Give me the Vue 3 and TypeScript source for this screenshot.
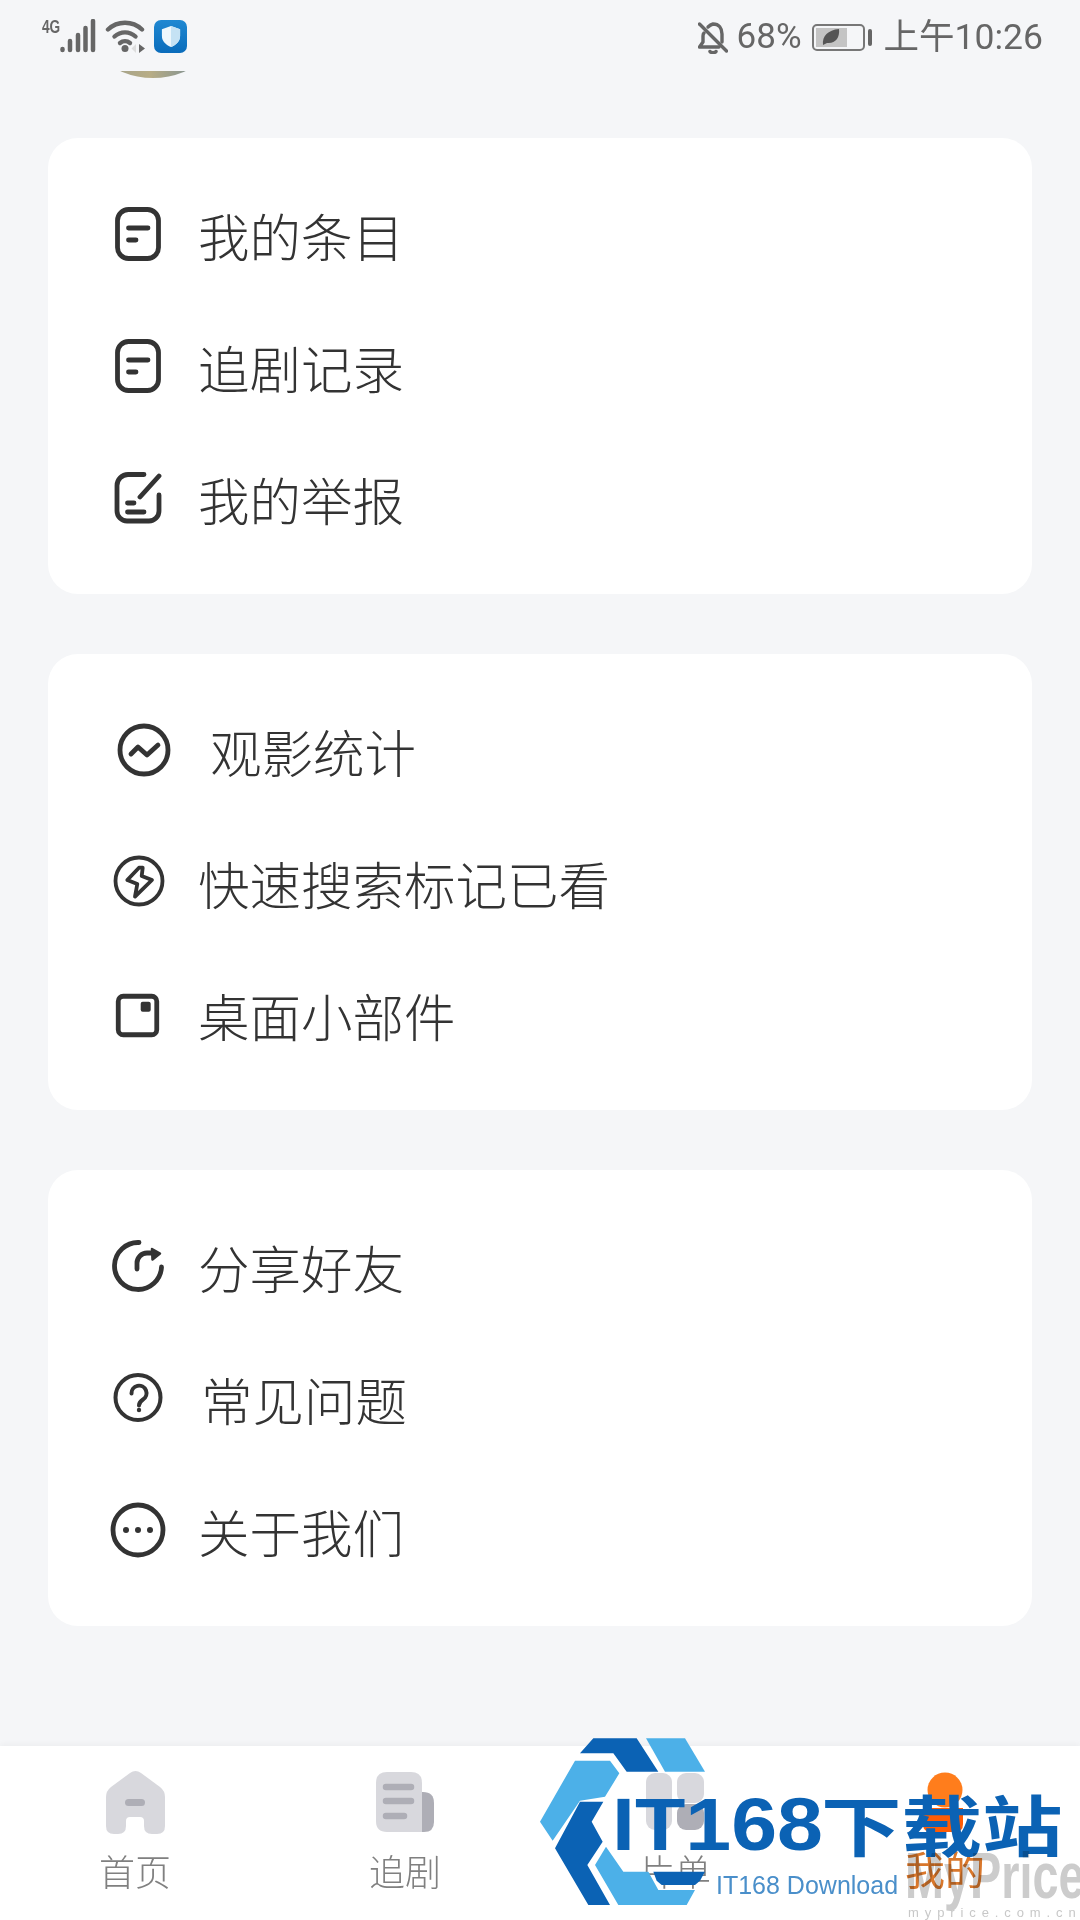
<script setup lang="ts">
interface MenuItem {
  label: string;
  icon: string;
  shift?: number;
}

const sections: MenuItem[][] = [
  [
    { label: '我的条目', icon: 'note' },
    { label: '追剧记录', icon: 'note' },
    { label: '我的举报', icon: 'report' },
  ],
  [
    { label: '观影统计', icon: 'chart', shift: 12 },
    { label: '快速搜索标记已看', icon: 'bolt' },
    { label: '桌面小部件', icon: 'widget' },
  ],
  [
    { label: '分享好友', icon: 'share' },
    { label: '常见问题', icon: 'help', shift: 3 },
    { label: '关于我们', icon: 'more' },
  ],
];
</script>

<template>
  <div class="page">
    <div class="status-bar">
      <div class="status-left">
        <span class="net">4G</span>
        <svg class="signal" width="36" height="34" viewBox="0 0 36 34">
          <path d="M2.500 31v-1M10 31v-9M18 31V16M25.500 31V9M33 31V2" stroke="#666" stroke-width="4.500" stroke-linecap="round" />
        </svg>
        <svg class="wifi" width="40" height="36" viewBox="0 0 40 36" fill="none" stroke="#666" stroke-width="4.400" stroke-linecap="round">
          <path d="M3 10.500C12.500 1.500 27.500 1.500 37 10.500" />
          <path d="M9.500 17.500c6-5.500 15-5.500 21 0" />
          <path d="M15 24c3-2.500 7-2.500 10 0" />
          <circle cx="20" cy="29.500" r="3.500" fill="#666" stroke="none" />
          <path d="M31 25v9l-4.500-4.500z" fill="#ddd" stroke="none" />
          <path d="M34 25l6 4.500-6 4.500z" fill="#666" stroke="none" />
        </svg>
        <div class="app-badge">
          <svg width="20" height="23" viewBox="0 0 22 25">
            <path d="M11 1l10 3.500V12c0 6-4.500 10-10 12C5.500 22 1 18 1 12V4.500z" fill="#eef7fc" />
            <path d="M11 1l10 3.500V12c0 6-4.500 10-10 12z" fill="#c5e2f4" />
          </svg>
        </div>
      </div>
      <div class="status-right">
        <svg class="bell" width="30" height="33" viewBox="0 0 30 33" fill="none" stroke="#666" stroke-width="3.400" stroke-linecap="round" stroke-linejoin="round">
          <path d="M1.500 3l27 27" />
          <path d="M6 12c0 0-1 1-1 3v6l-3.500 5H21" />
          <path d="M10 6c1.500-1.500 3-2.500 5-3 6 0 9 4 9 10v8" />
          <path d="M12 30.500c1 1.500 5 1.500 6 0" />
        </svg>
        <span class="percent">68%</span>
        <div class="battery">
          <div class="battery-body">
            <div class="battery-fill">
              <svg width="18" height="18" viewBox="0 0 18 18">
                <path d="M1 17C0 8 6 2 17 1c1 9-4 15-12 14z" fill="#555" />
              </svg>
            </div>
          </div>
          <div class="battery-nub"></div>
        </div>
        <span class="clock">上午10:26</span>
      </div>
    </div>

    <div class="avatar-sliver"><div class="avatar"></div></div>

    <div class="sections">
      <section v-for="(items, i) in sections" :key="i" class="card">
        <div v-for="item in items" :key="item.label" class="row">
          <svg class="row-icon" width="60" height="60" viewBox="0 0 60 60" fill="none" stroke="#333" stroke-width="4.800" stroke-linecap="round" stroke-linejoin="round">
            <template v-if="item.icon === 'note'">
              <rect x="9.500" y="5.500" width="41" height="49" rx="11" />
              <path d="M20.500 24H40M20.500 36H28" />
            </template>
            <template v-else-if="item.icon === 'report'">
              <path d="M36 6.500H20a11 11 0 0 0-11 11V43a10 10 0 0 0 10 10h22a10 10 0 0 0 10-10V27" />
              <path d="M32 29L51 8M19.500 35H26M19.500 44H36" />
            </template>
            <template v-else-if="item.icon === 'chart'">
              <circle cx="36" cy="30" r="24" />
              <path d="M23 34l7-7 9 8 11-10" />
            </template>
            <template v-else-if="item.icon === 'bolt'">
              <g stroke-width="3.800">
                <circle cx="31" cy="29" r="23.500" />
                <path d="M31 15.700L19.300 28l10 4L27 44.700 44 28l-10.300-4 1-8.300z" />
              </g>
            </template>
            <template v-else-if="item.icon === 'widget'">
              <rect x="10.250" y="12.250" width="38.500" height="38.500" rx="5" />
              <rect x="32.700" y="17.700" width="10" height="10" rx="2" fill="#333" stroke="none" />
            </template>
            <template v-else-if="item.icon === 'share'">
              <path d="M31 6.500A23.500 23.500 0 1 0 53.500 31" />
              <path d="M29 33v-6a10 10 0 0 1 10-10h6" />
              <path d="M44 13l8 4.500-7.500 6z" fill="#333" stroke-width="2.500" />
            </template>
            <template v-else-if="item.icon === 'help'">
              <g stroke-width="4">
                <circle cx="30" cy="29.500" r="22.500" />
                <path d="M23.500 25.500a7.500 7.500 0 1 1 11.500 6c-3 2-4 3-4 6" />
              </g>
              <circle cx="31" cy="42" r="2.200" fill="#333" stroke="none" />
            </template>
            <template v-else>
              <circle cx="30" cy="30" r="25" />
              <g fill="#333" stroke="none">
                <circle cx="18" cy="30" r="3" />
                <circle cx="30" cy="30" r="3" />
                <circle cx="42" cy="30" r="3" />
              </g>
            </template>
          </svg>
          <span class="row-label" :style="{ marginLeft: `${30 + (item.shift ?? 0)}px` }">{{ item.label }}</span>
        </div>
      </section>
    </div>

    <nav class="tabs">
      <div class="tab">
        <div class="tab-icon">
          <svg width="59" height="64" viewBox="0 0 59 64">
            <path d="M24 3q5.500-4 11 0L54 17q5 4 5 10v29q0 8-8 8h-5q-8 0-8-8v-5q0-4-4-4H24q-4 0-4 4v5q0 8-8 8H8q-8 0-8-8V27q0-6 5-10z" fill="#d8d8dd" />
            <rect x="19" y="29" width="20" height="7" rx="3.500" fill="#aeaeb6" />
          </svg>
        </div>
        <span>首页</span>
      </div>
      <div class="tab">
        <div class="tab-icon">
          <svg width="58" height="60" viewBox="0 0 58 60">
            <path d="M36 20h11q11 0 11 11v19q0 10-10 10H36z" fill="#aeaeb6" />
            <path d="M11 0h24q11 0 11 11v49H11Q0 60 0 49V11Q0 0 11 0z" fill="#d8d8dd" />
            <path d="M10 15h25M10 29h25M10 44h18" stroke="#aeaeb6" stroke-width="6.500" stroke-linecap="round" />
          </svg>
        </div>
        <span>追剧</span>
      </div>
      <div class="tab">
        <div class="tab-icon">
          <svg width="58" height="58" viewBox="0 0 58 58">
            <rect x="0" y="0" width="26" height="57" rx="9" fill="#d8d8dd" />
            <rect x="31" y="0" width="27" height="30" rx="9" fill="#d8d8dd" />
            <rect x="31" y="31" width="27" height="26" rx="9" fill="#aeaeb6" />
          </svg>
        </div>
        <span>片单</span>
      </div>
      <div class="tab tab-active">
        <div class="tab-icon">
          <svg width="58" height="60" viewBox="0 0 58 60">
            <path d="M7 36h40v16q0 8-8 8H15q-8 0-8-8z" fill="#ff5c05" />
            <circle cx="29" cy="18" r="17.500" fill="#ff7d1c" />
          </svg>
        </div>
        <span>我的</span>
      </div>
    </nav>

    <div class="marks">
      <svg class="logo" width="200" height="180" viewBox="0 0 600 540">
        <g fill="#0b62b4">
          <path d="M150 70L190 25H320L385 125H290L250 70z" />
          <path d="M150 215H220L185 275 218 335 172 405 240 525H175L75 355z" />
          <path d="M370 425H525L510 452 495 465H395L380 452z" />
        </g>
        <g fill="#4cb0e8">
          <path d="M348 25H465L525 125H405z" />
          <path d="M135 92H240L268 130 225 200 150 212 68 332 30 275z" />
          <path d="M228 350L280 425H355L385 480H495L470 525H265L195 405z" />
        </g>
      </svg>
      <div class="mark-latin">IT168</div>
      <div class="mark-cjk">下载站</div>
      <div class="mark-sub">IT168 Download</div>
      <div class="mark-price">MyPrice</div>
      <div class="mark-url">myprice.com.cn</div>
    </div>
  </div>
</template>

<style>
html,
body {
  margin: 0;
  background: #f5f6f8;
}
</style>

<style scoped>
.page {
  position: relative;
  width: 1080px;
  height: 1920px;
  overflow: hidden;
  background: #f5f6f8;
  display: flex;
  flex-direction: column;
  font-family: "Noto Sans CJK SC", "Noto Sans", sans-serif;
}

.status-bar {
  height: 71px;
  flex: none;
  display: flex;
  justify-content: space-between;
  padding: 0 37px 0 42px;
  box-sizing: border-box;
  color: #666;
}

.status-left {
  display: flex;
  align-items: flex-start;
  padding-top: 19px;
}

.net {
  font: 700 19px/16px "Liberation Sans", sans-serif;
  width: 18px;
  transform: scaleX(0.72);
  transform-origin: left top;
}

.wifi {
  margin-left: 9px;
}

.app-badge {
  width: 33px;
  height: 33px;
  margin-left: 9px;
  margin-top: 1px;
  border-radius: 7px;
  background: linear-gradient(180deg, #1f88d2, #0a6cbb);
  display: flex;
  align-items: center;
  justify-content: center;
}

.status-right {
  display: flex;
  align-items: center;
  height: 74px;
  font-family: Roboto, "Noto Sans CJK SC", sans-serif;
  font-size: 35px;
  line-height: 42px;
}

.percent {
  margin-left: 9px;
}

.battery {
  display: flex;
  align-items: center;
  margin-left: 10px;
}

.battery-body {
  width: 53px;
  height: 27px;
  box-sizing: border-box;
  border: 2px solid #777;
  border-radius: 5px;
  padding: 2px;
}

.battery-fill {
  width: 31px;
  height: 100%;
  background: #c4c4c4;
  display: flex;
  align-items: center;
  justify-content: center;
}

.battery-nub {
  width: 4px;
  height: 17px;
  margin-left: 3px;
  border-radius: 2px;
  background: #666;
}

.clock {
  margin-left: 12px;
  font-size: 35.500px;
}

.avatar-sliver {
  height: 7px;
  width: 70px;
  margin-left: 118px;
  flex: none;
  overflow: hidden;
  position: relative;
}

.avatar {
  position: absolute;
  left: -45px;
  bottom: 0;
  width: 160px;
  height: 160px;
  border-radius: 50%;
  background: linear-gradient(90deg, #a7a48a 30%, #b8ad86 48%, #8a9690 70%);
}

.sections {
  margin: 60px 48px 0;
  display: flex;
  flex-direction: column;
  gap: 60px;
}

.card {
  background: #fff;
  border-radius: 30px;
  padding: 30px 0;
}

.row {
  height: 132px;
  display: flex;
  align-items: center;
  padding-left: 60px;
}

.row-icon {
  flex: none;
  overflow: visible;
}

.row-label {
  margin-top: 2px;
  font-size: 51.500px;
  font-weight: 300;
  line-height: 60px;
  color: #333;
}

.tabs {
  margin-top: auto;
  height: 174px;
  flex: none;
  background: #fff;
  box-shadow: 0 -2px 6px rgba(0, 0, 0, 0.04);
  display: grid;
  grid-template-columns: repeat(4, 1fr);
}

.tab {
  display: flex;
  flex-direction: column;
  align-items: center;
  padding-top: 24px;
}

.tab-icon {
  height: 64px;
  display: flex;
  align-items: center;
}

.tab span {
  margin-top: 16px;
  font-size: 36px;
  font-weight: 300;
  line-height: 40px;
  color: #808080;
}

.tab-active span {
  margin-top: 14px;
  font-size: 40px;
  font-weight: 400;
  color: #d9772b;
}

.marks {
  position: absolute;
  left: 0;
  top: 0;
  width: 1080px;
  height: 1920px;
  pointer-events: none;
}

.logo {
  position: absolute;
  left: 530px;
  top: 1730px;
}

.mark-latin {
  position: absolute;
  left: 612px;
  top: 1780px;
  color: #0b62b4;
  font: 700 75px/88px "Liberation Sans", sans-serif;
  transform: scaleX(1.1);
  transform-origin: left top;
  white-space: nowrap;
}

.mark-cjk {
  position: absolute;
  left: 821px;
  top: 1778px;
  color: #0b62b4;
  font: 700 66px/88px "Noto Sans CJK SC", sans-serif;
  transform: scaleX(1.22);
  transform-origin: left top;
  white-space: nowrap;
}

.mark-sub {
  position: absolute;
  left: 716px;
  top: 1871px;
  color: #4a8fca;
  font: 400 25px/28px "Liberation Sans", sans-serif;
  white-space: nowrap;
}

.mark-price {
  position: absolute;
  left: 905px;
  top: 1840px;
  color: #cccccc;
  mix-blend-mode: multiply;
  font: 700 65px/72px "Liberation Sans", sans-serif;
  transform: scaleX(0.72);
  transform-origin: left top;
  white-space: nowrap;
}

.mark-url {
  position: absolute;
  left: 908px;
  top: 1906px;
  color: #c8c8c8;
  font: 400 13px/14px "Liberation Sans", sans-serif;
  letter-spacing: 5.900px;
  white-space: nowrap;
}
</style>
